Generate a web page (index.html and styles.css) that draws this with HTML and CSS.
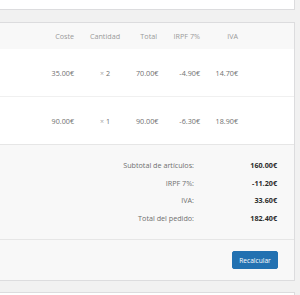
FILE: index.html
```html
<!DOCTYPE html>
<html lang="es">
<head>
<meta charset="utf-8">
<link rel="stylesheet" href="styles.css">
</head>
<body>
<div class="prev-box"></div>
<div class="order-box">
  <div class="items">
    <div class="row head">
      <div class="c item"></div>
      <div class="c cost">Coste</div>
      <div class="c qty">Cantidad</div>
      <div class="c total">Total</div>
      <div class="c irpf">IRPF 7%</div>
      <div class="c iva">IVA</div>
      <div class="c rest"></div>
    </div>
    <div class="row line">
      <div class="c item"></div>
      <div class="c cost">35.00€</div>
      <div class="c qty"><span class="times">×</span> 2</div>
      <div class="c total">70.00€</div>
      <div class="c irpf">-4.90€</div>
      <div class="c iva">14.70€</div>
      <div class="c rest"></div>
    </div>
    <div class="row line">
      <div class="c item"></div>
      <div class="c cost">90.00€</div>
      <div class="c qty"><span class="times">×</span> 1</div>
      <div class="c total">90.00€</div>
      <div class="c irpf">-6.30€</div>
      <div class="c iva">18.90€</div>
      <div class="c rest"></div>
    </div>
  </div>
  <div class="totals">
    <div class="label">Subtotal de artículos:</div><div class="value">160.00€</div>
    <div class="label">IRPF 7%:</div><div class="value">-11.20€</div>
    <div class="label">IVA:</div><div class="value">33.60€</div>
    <div class="label">Total del pedido:</div><div class="value">182.40€</div>
  </div>
  <div class="actions">
    <button class="btn">Recalcular</button>
  </div>
</div>
<div class="next-box"></div>
</body>
</html>
```
FILE: styles.css
```css
html, body {
  margin: 0;
  padding: 0;
}
body {
  background: #f1f1f1;
  font-family: "Open Sans", "Noto Sans", sans-serif;
  font-size: 7.2px;
  color: #777;
  width: 300px;
  height: 295px;
  overflow: hidden;
}
.prev-box {
  width: 294px;
  height: 9px;
  background: #fff;
  border-right: 1px solid #dcdcde;
  border-bottom: 1px solid #dcdcde;
}
.order-box {
  margin-top: 12px;
  width: 294px;
  border-top: 1px solid #dcdcde;
  border-right: 1px solid #dcdcde;
  border-bottom: 1px solid #dcdcde;
  background: #f8f8f8;
}
.row {
  display: grid;
  grid-template-columns: 44px 30px 62px 21px 43px 38px 1fr;
  align-items: center;
}
.c {
  text-align: right;
  white-space: nowrap;
}
.c.qty {
  text-align: center;
}
.head {
  height: 26px;
  background: #f8f8f8;
  color: #9a9a9a;
}
.line {
  height: 47px;
  background: #fff;
  border-bottom: 1px solid #f0f0f0;
  color: #6f6f6f;
}
.line:last-child {
  border-bottom-color: #e6e6e6;
}
.times {
  color: #a8a8a8;
  font-size: 7px;
}
.totals {
  display: grid;
  grid-template-columns: 1fr 83px;
  padding: 12px 17px 12px 0;
  line-height: 17.5px;
  border-bottom: 1px solid #e6e6e6;
}
.label {
  text-align: right;
  color: #6f6f6f;
}
.value {
  text-align: right;
  font-weight: 700;
  color: #2c2c2c;
}
.actions {
  display: flex;
  justify-content: flex-end;
  padding: 11px 16px 11px 0;
}
.btn {
  height: 18px;
  width: 46px;
  padding: 0;
  background: #2271b1;
  border: 1px solid #2271b1;
  border-radius: 2px;
  color: #fff;
  font-family: "Open Sans", "Noto Sans", sans-serif;
  font-size: 6.6px;
}
.next-box {
  margin-top: 11px;
  width: 294px;
  height: 10px;
  background: #fff;
  border-top: 1px solid #dcdcde;
  border-right: 1px solid #dcdcde;
}
```
